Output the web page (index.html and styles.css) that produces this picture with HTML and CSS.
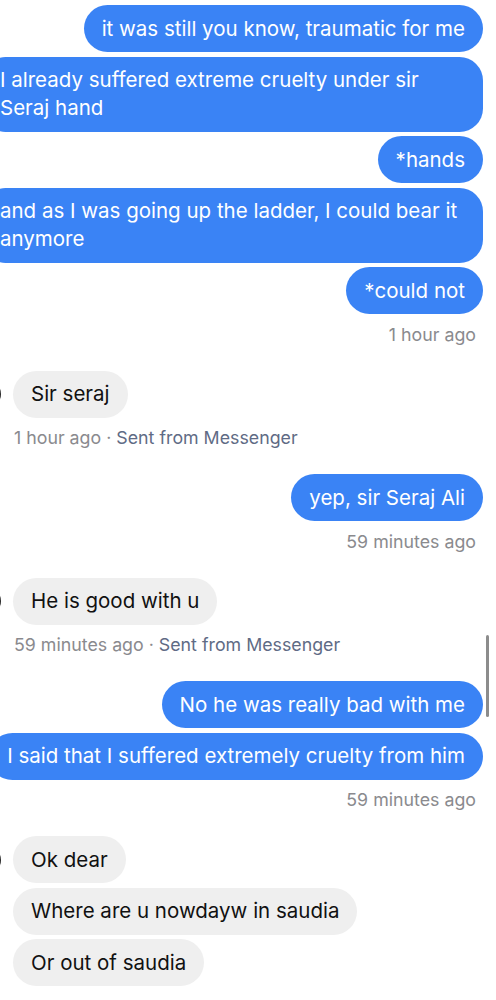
FILE: index.html
```html
<!DOCTYPE html>
<html lang="en">
<head>
<meta charset="utf-8">
<title>Chat</title>
<link rel="stylesheet" href="styles.css">
</head>
<body>
<div class="chat">
  <div class="group sent">
    <div class="bubble">it was still you know, traumatic for me</div>
    <div class="bubble">I already suffered extreme cruelty under sir Seraj hand</div>
    <div class="bubble">*hands</div>
    <div class="bubble">and as I was going up the ladder, I could bear it anymore</div>
    <div class="bubble">*could not</div>
    <div class="meta">1 hour ago</div>
  </div>

  <div class="group received">
    <div class="row">
      <div class="avatar"></div>
      <div class="bubble">Sir seraj</div>
    </div>
    <div class="meta">1 hour ago · <span class="via">Sent from Messenger</span></div>
  </div>

  <div class="group sent">
    <div class="bubble">yep, sir Seraj Ali</div>
    <div class="meta">59 minutes ago</div>
  </div>

  <div class="group received">
    <div class="row">
      <div class="avatar"></div>
      <div class="bubble">He is good with u</div>
    </div>
    <div class="meta">59 minutes ago · <span class="via">Sent from Messenger</span></div>
  </div>

  <div class="group sent">
    <div class="bubble">No he was really bad with me</div>
    <div class="bubble">I said that I suffered extremely cruelty from him</div>
    <div class="meta">59 minutes ago</div>
  </div>

  <div class="group received">
    <div class="row">
      <div class="avatar"></div>
      <div class="bubble">Ok dear</div>
    </div>
    <div class="row">
      <div class="avatar-space"></div>
      <div class="bubble">Where are u nowdayw in saudia</div>
    </div>
    <div class="row">
      <div class="avatar-space"></div>
      <div class="bubble">Or out of saudia</div>
    </div>
  </div>
</div>
<div class="scrollbar"></div>
</body>
</html>
```
FILE: styles.css
```css
html, body {
  margin: 0;
  padding: 0;
  background: #ffffff;
  overflow: hidden;
  height: 1000px;
}

body {
  font-family: "Inter", "Liberation Sans", sans-serif;
  -webkit-font-smoothing: antialiased;
  position: relative;
}

.chat {
  box-sizing: border-box;
  width: 523px;
  margin-left: -40px;
  padding-top: 5px;
  display: flex;
  flex-direction: column;
  gap: 25px;
}

.group {
  display: flex;
  flex-direction: column;
  gap: 4.5px;
}

.sent {
  align-items: flex-end;
}

.received {
  align-items: flex-start;
}

.bubble {
  box-sizing: border-box;
  font-size: 20.5px;
  line-height: 28px;
  padding: 9.5px 18px;
  border-radius: 23.5px;
  max-width: 501px;
}

.sent .bubble {
  background: #3a83f5;
  color: #ffffff;
}

.received .bubble {
  background: #efefef;
  color: #111111;
}

.row {
  display: flex;
  align-items: center;
  gap: 12px;
  padding-left: 13px;
}

.avatar,
.avatar-space {
  width: 28px;
  height: 28px;
  flex: none;
}

.avatar {
  border-radius: 50%;
  background: #2a2a2a;
}

.meta {
  font-size: 17.8px;
  line-height: 22px;
  color: #8a8a8e;
  margin-top: 5px;
}

.sent .meta {
  margin-right: 7px;
}

.received .meta {
  margin-left: 54px;
}

.via {
  color: #5f6b85;
}

.scrollbar {
  position: absolute;
  left: 486px;
  top: 635px;
  width: 3px;
  height: 82px;
  border-radius: 2px;
  background: #8c8c8c;
}
```
